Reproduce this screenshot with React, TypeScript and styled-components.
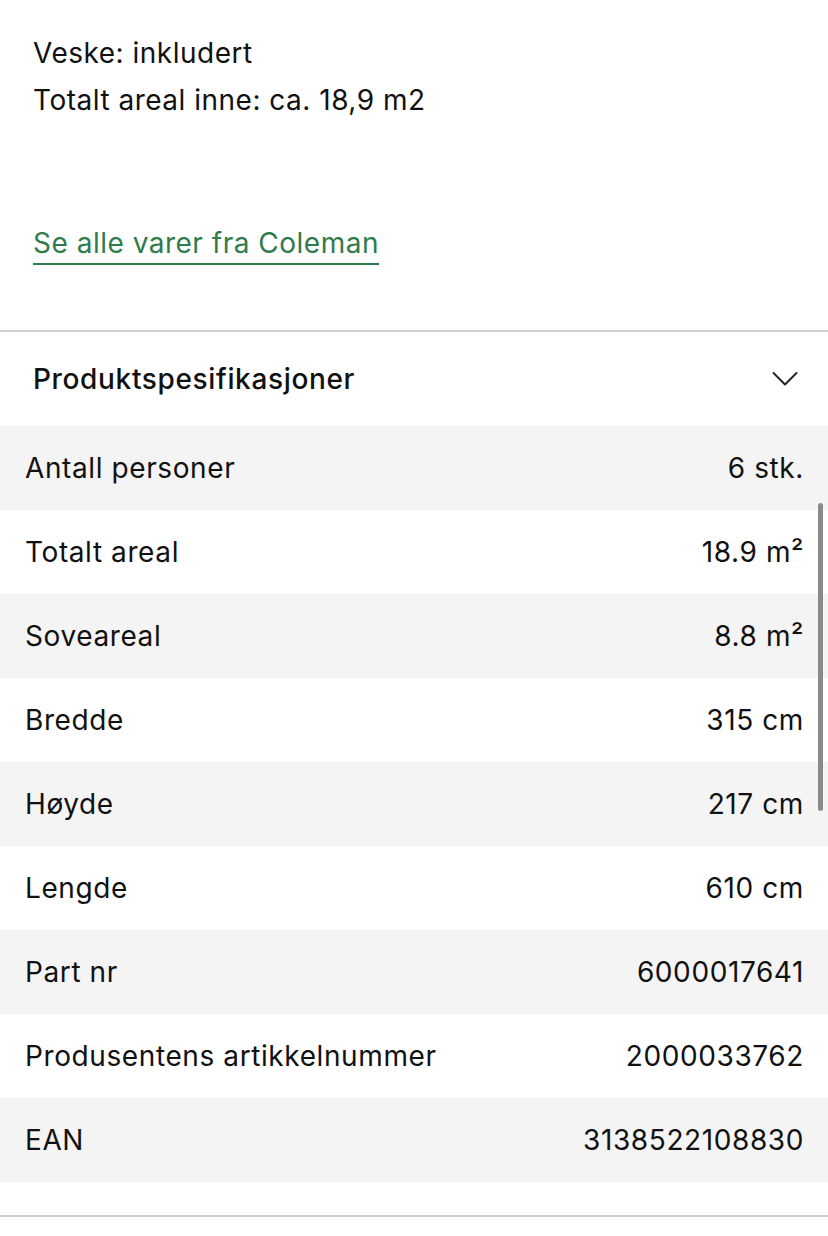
import React from "react";
import styled, { createGlobalStyle } from "styled-components";

const Global = createGlobalStyle`
  html, body { margin: 0; padding: 0; background: #fff; }
  body { font-family: Inter, "Noto Sans", sans-serif; color: #111; -webkit-font-smoothing: antialiased; }
`;

const Page = styled.div`
  position: relative;
  width: 828px;
  height: 1236px;
  overflow: hidden;
  background: #fff;
`;

const Intro = styled.section`
  padding: 30px 33px 0 33px;
  display: flex;
  flex-direction: column;
`;

const Line = styled.p`
  margin: 0;
  font-size: 28px;
  line-height: 47px;
  letter-spacing: 0.5px;
`;

const BrandLink = styled.a`
  align-self: flex-start;
  margin-top: 101px;
  font-size: 28px;
  line-height: 36px;
  color: #2f7b4b;
  text-decoration: none;
  border-bottom: 2px solid #2f7b4b;
  padding-bottom: 2px;
  letter-spacing: 0.5px;
`;

const Divider = styled.hr`
  margin: 0;
  border: none;
  height: 2px;
  background: #cfcfcf;
`;

const Accordion = styled.section`
  margin-top: 65px;
`;

const Header = styled.div`
  height: 94px;
  display: flex;
  align-items: center;
  justify-content: space-between;
  padding: 0 30px 0 33px;
`;

const Title = styled.h2`
  margin: 0;
  font-size: 28px;
  font-weight: 500;
  letter-spacing: 0.65px;
`;

const Table = styled.div`
  display: flex;
  flex-direction: column;
`;

const Row = styled.div<{ $shade: boolean }>`
  height: 84px;
  display: flex;
  align-items: center;
  justify-content: space-between;
  padding: 0 24px 0 25px;
  background: ${(p) => (p.$shade ? "#f4f4f4" : "#fff")};
  font-size: 28px;
  letter-spacing: 0.6px;
`;

const Label = styled.span``;
const Value = styled.span``;

const BottomGap = styled.div`
  height: 33px;
`;

const Scrollbar = styled.div`
  position: absolute;
  left: 818px;
  top: 503px;
  width: 5px;
  height: 308px;
  border-radius: 3px;
  background: #8a8a8a;
`;

const specs: [string, string][] = [
  ["Antall personer", "6 stk."],
  ["Totalt areal", "18.9 m²"],
  ["Soveareal", "8.8 m²"],
  ["Bredde", "315 cm"],
  ["Høyde", "217 cm"],
  ["Lengde", "610 cm"],
  ["Part nr", "6000017641"],
  ["Produsentens artikkelnummer", "2000033762"],
  ["EAN", "3138522108830"],
];

export default function App() {
  return (
    <Page>
      <Global />
      <Intro>
        <Line>Veske: inkludert</Line>
        <Line>Totalt areal inne: ca. 18,9 m2</Line>
        <BrandLink href="#">Se alle varer fra Coleman</BrandLink>
      </Intro>
      <Accordion>
        <Divider />
        <Header>
          <Title>Produktspesifikasjoner</Title>
          <svg width="26" height="16" viewBox="0 0 26 16" fill="none">
            <path d="M1.5 2 L13 13.5 L24.5 2" stroke="#222" strokeWidth="2" strokeLinecap="round" strokeLinejoin="round" />
          </svg>
        </Header>
        <Table>
          {specs.map(([k, v], i) => (
            <Row key={k} $shade={i % 2 === 0}>
              <Label>{k}</Label>
              <Value>{v}</Value>
            </Row>
          ))}
        </Table>
        <BottomGap />
        <Divider />
      </Accordion>
      <Scrollbar />
    </Page>
  );
}
